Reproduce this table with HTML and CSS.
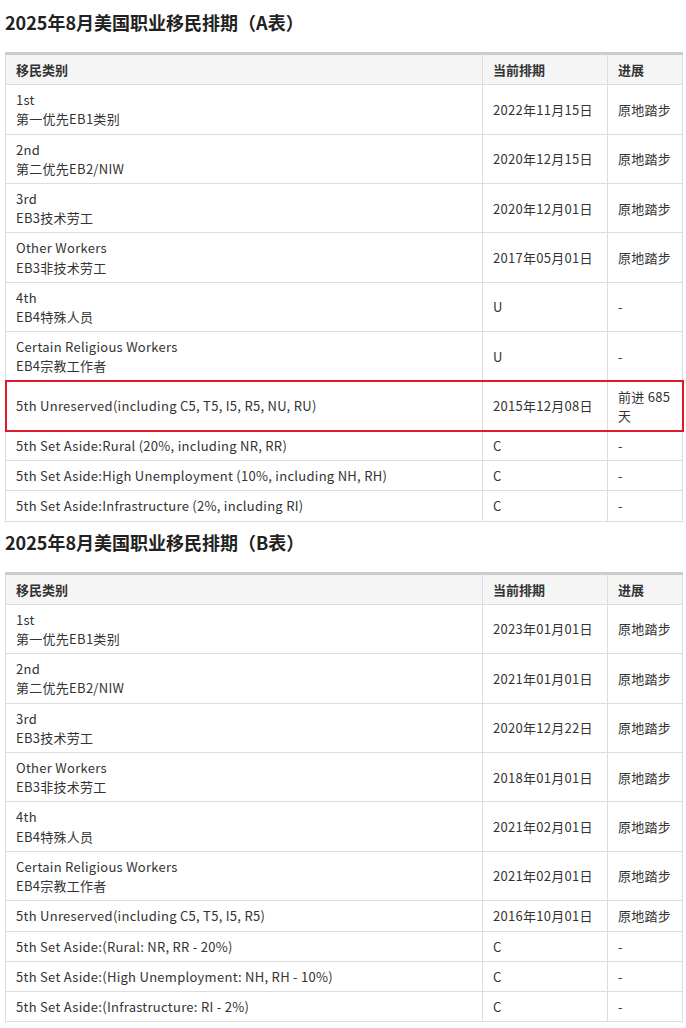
FILE: index.html
```html
<!DOCTYPE html>
<html lang="zh-CN">
<head>
<meta charset="utf-8">
<title>2025年8月美国职业移民排期</title>
<link rel="stylesheet" href="styles.css">
</head>
<body>
<div class="page">
  <h2 class="title">2025年8月美国职业移民排期（A表）</h2>
  <table class="vb">
    <colgroup><col class="c1"><col class="c2"><col class="c3"></colgroup>
    <thead>
      <tr><th>移民类别</th><th>当前排期</th><th>进展</th></tr>
    </thead>
    <tbody>
      <tr><td>1st<br>第一优先EB1类别</td><td>2022年11月15日</td><td>原地踏步</td></tr>
      <tr><td>2nd<br>第二优先EB2/NIW</td><td>2020年12月15日</td><td>原地踏步</td></tr>
      <tr><td>3rd<br>EB3技术劳工</td><td>2020年12月01日</td><td>原地踏步</td></tr>
      <tr><td>Other Workers<br>EB3非技术劳工</td><td>2017年05月01日</td><td>原地踏步</td></tr>
      <tr><td>4th<br>EB4特殊人员</td><td>U</td><td>-</td></tr>
      <tr><td>Certain Religious Workers<br>EB4宗教工作者</td><td>U</td><td>-</td></tr>
      <tr class="hl"><td>5th Unreserved(including C5, T5, I5, R5, NU, RU)</td><td>2015年12月08日</td><td class="just">前进 685 天</td></tr>
      <tr><td>5th Set Aside:Rural (20%, including NR, RR)</td><td>C</td><td>-</td></tr>
      <tr><td>5th Set Aside:High Unemployment (10%, including NH, RH)</td><td>C</td><td>-</td></tr>
      <tr><td>5th Set Aside:Infrastructure (2%, including RI)</td><td>C</td><td>-</td></tr>
    </tbody>
  </table>

  <h2 class="title">2025年8月美国职业移民排期（B表）</h2>
  <table class="vb">
    <colgroup><col class="c1"><col class="c2"><col class="c3"></colgroup>
    <thead>
      <tr><th>移民类别</th><th>当前排期</th><th>进展</th></tr>
    </thead>
    <tbody>
      <tr><td>1st<br>第一优先EB1类别</td><td>2023年01月01日</td><td>原地踏步</td></tr>
      <tr><td>2nd<br>第二优先EB2/NIW</td><td>2021年01月01日</td><td>原地踏步</td></tr>
      <tr><td>3rd<br>EB3技术劳工</td><td>2020年12月22日</td><td>原地踏步</td></tr>
      <tr><td>Other Workers<br>EB3非技术劳工</td><td>2018年01月01日</td><td>原地踏步</td></tr>
      <tr><td>4th<br>EB4特殊人员</td><td>2021年02月01日</td><td>原地踏步</td></tr>
      <tr><td>Certain Religious Workers<br>EB4宗教工作者</td><td>2021年02月01日</td><td>原地踏步</td></tr>
      <tr><td>5th Unreserved(including C5, T5, I5, R5)</td><td>2016年10月01日</td><td>原地踏步</td></tr>
      <tr><td>5th Set Aside:(Rural: NR, RR - 20%)</td><td>C</td><td>-</td></tr>
      <tr><td>5th Set Aside:(High Unemployment: NH, RH - 10%)</td><td>C</td><td>-</td></tr>
      <tr><td>5th Set Aside:(Infrastructure: RI - 2%)</td><td>C</td><td>-</td></tr>
    </tbody>
  </table>
</div>
</body>
</html>
```

FILE: styles.css
```css
html, body {
  margin: 0;
  padding: 0;
  background: #ffffff;
}

body {
  font-family: "Noto Sans CJK SC", sans-serif;
  color: #333333;
}

.page {
  padding: 0 4px 0 5px;
}

.title {
  margin: 8px 0 16px;
  font-size: 18px;
  line-height: 28px;
  font-weight: 700;
  color: #222222;
}

.vb {
  width: 677px;
  border-collapse: collapse;
  table-layout: fixed;
  font-size: 13px;
  line-height: 19.2px;
  border: 1px solid #dddddd;
}

.vb + .title {
  margin-top: 6px;
}

.c1 { width: 477px; }
.c2 { width: 125px; }
.c3 { width: 75px; }

.vb th,
.vb td {
  border: 1px solid #dddddd;
  padding: 5px 10px;
  text-align: left;
  vertical-align: middle;
}

.vb td {
  letter-spacing: 0.28px;
}

.vb th {
  background: #f5f5f5;
  font-weight: 700;
  border-top: 3px solid #cccccc;
  color: #333333;
}

.vb tr.hl {
  outline: 2px solid #e0182d;
  outline-offset: -1px;
}

.just {
  text-align: justify;
}
```
